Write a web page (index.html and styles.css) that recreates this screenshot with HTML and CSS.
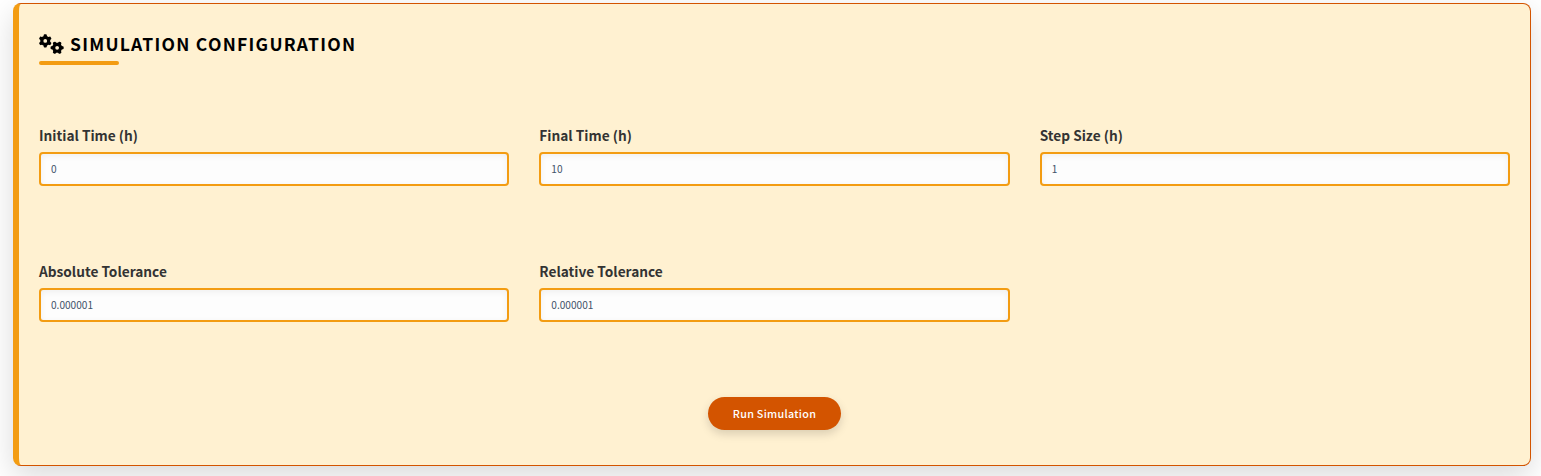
FILE: index.html
```html
<!DOCTYPE html>
<html lang="en">
<head>
<meta charset="utf-8">
<title>Simulation Configuration</title>
<link rel="stylesheet" href="styles.css">
</head>
<body>
<section class="card">
  <h2 class="title">
    <svg class="gears" viewBox="0 0 640 512" aria-hidden="true">
      <path id="gear" d="M308.5 135.3c7.1-6.3 9.9-16.2 6.2-25c-2.3-5.3-4.8-10.5-7.6-15.5L304 89.4c-3-5-6.3-9.9-9.8-14.6c-5.7-7.6-15.7-10.1-24.7-7.1l-28.2 9.3c-10.7-8.8-23-16-36.2-20.9L199 27.1c-1.9-9.3-9.1-16.7-18.5-17.8C173.9 8.4 167.2 8 160.4 8h-.7c-6.8 0-13.5 .4-20.1 1.2c-9.4 1.1-16.6 8.6-18.5 17.8L115 56.1c-13.3 5-25.5 12.1-36.2 20.9L50.5 67.8c-9-3-19-.5-24.7 7.1c-3.5 4.7-6.8 9.6-9.9 14.6l-3 5.3c-2.8 5-5.3 10.2-7.6 15.6c-3.7 8.7-.9 18.6 6.2 25l22.2 19.8C32.6 161.9 32 168.9 32 176s.6 14.1 1.7 20.9L11.5 216.7c-7.1 6.3-9.9 16.2-6.2 25c2.3 5.3 4.8 10.5 7.6 15.6l3 5.2c3 5.1 6.3 9.9 9.9 14.6c5.7 7.6 15.7 10.1 24.7 7.1l28.2-9.3c10.7 8.8 23 16 36.2 20.9l6.1 29.1c1.9 9.3 9.1 16.7 18.5 17.8c6.7 .8 13.5 1.2 20.4 1.2s13.7-.4 20.4-1.2c9.4-1.1 16.6-8.6 18.5-17.8l6.1-29.1c13.3-5 25.5-12.1 36.2-20.9l28.2 9.3c9 3 19 .5 24.7-7.1c3.5-4.7 6.8-9.5 9.8-14.6l3.1-5.4c2.8-5 5.3-10.2 7.6-15.5c3.7-8.7 .9-18.6-6.2-25l-22.2-19.8c1.1-6.8 1.7-13.8 1.7-20.9s-.6-14.1-1.7-20.9l22.2-19.8zM112 176a48 48 0 1 1 96 0 48 48 0 1 1 -96 0z"/>
      <use href="#gear" transform="translate(464 352) rotate(90) translate(-160 -176)"/>
    </svg>
    <span class="title-text">Simulation Configuration</span>
  </h2>
  <div class="underline"></div>
  <form class="fields">
    <label class="field"><span class="label">Initial Time (h)</span><input class="input" type="text" value="0"></label>
    <label class="field"><span class="label">Final Time (h)</span><input class="input" type="text" value="10"></label>
    <label class="field"><span class="label">Step Size (h)</span><input class="input" type="text" value="1"></label>
    <label class="field"><span class="label">Absolute Tolerance</span><input class="input" type="text" value="0.000001"></label>
    <label class="field"><span class="label">Relative Tolerance</span><input class="input" type="text" value="0.000001"></label>
  </form>
  <div class="actions"><button class="run" type="button">Run Simulation</button></div>
</section>
</body>
</html>
```
FILE: styles.css
```css
* { box-sizing: border-box; }
body {
  margin: 0;
  padding: 3px 10px 10px 13px;
  height: 476px;
  overflow: hidden;
  background: #fff;
  font-family: "Noto Sans CJK SC", "Noto Sans", sans-serif;
}
.card {
  height: 463px;
  padding: 28px 20px 0;
  background: #fff1d1;
  border: 1px solid #d35400;
  border-left: 6px solid #f39c12;
  border-radius: 8px;
  box-shadow: 0 10px 30px rgba(0, 0, 0, 0.15);
}
.title {
  display: flex;
  align-items: center;
  gap: 6px;
  height: 24px;
  margin: 0;
  font-size: 17.5px;
  line-height: 24px;
  font-weight: 700;
  letter-spacing: 1.27px;
  text-transform: uppercase;
  color: #000;
}
.title-text { padding-bottom: 1px; }
.gears { width: 25px; height: 20px; flex: none; }
.underline {
  width: 80px;
  height: 4px;
  margin-top: 5px;
  border-radius: 2px;
  background: #f39c12;
}
.fields {
  display: grid;
  grid-template-columns: repeat(3, 1fr);
  grid-template-rows: 136px 76px;
  column-gap: 30px;
  margin: 60px 0 0;
}
.field { display: block; }
.label {
  display: block;
  height: 27px;
  line-height: 20px;
  font-size: 13.7px;
  font-weight: 700;
  color: #333;
}
.input {
  display: block;
  width: 100%;
  height: 34px;
  padding: 0 10px 2px;
  border: 2px solid #f39c12;
  border-radius: 4px;
  background: #fdfdfd;
  box-shadow: inset 0 2px 6px rgba(0, 0, 0, 0.06);
  font-family: inherit;
  font-size: 10.1px;
  color: #3f5369;
}
.actions { display: flex; justify-content: center; padding-top: 60px; }
.run {
  width: 133px;
  height: 33px;
  padding: 0;
  border: 0;
  border-radius: 17px;
  background: #d35400;
  box-shadow: 0 4px 10px rgba(0, 0, 0, 0.15);
  font-family: inherit;
  font-size: 10.75px;
  font-weight: 500;
  letter-spacing: 0.3px;
  color: #fff;
}
```
